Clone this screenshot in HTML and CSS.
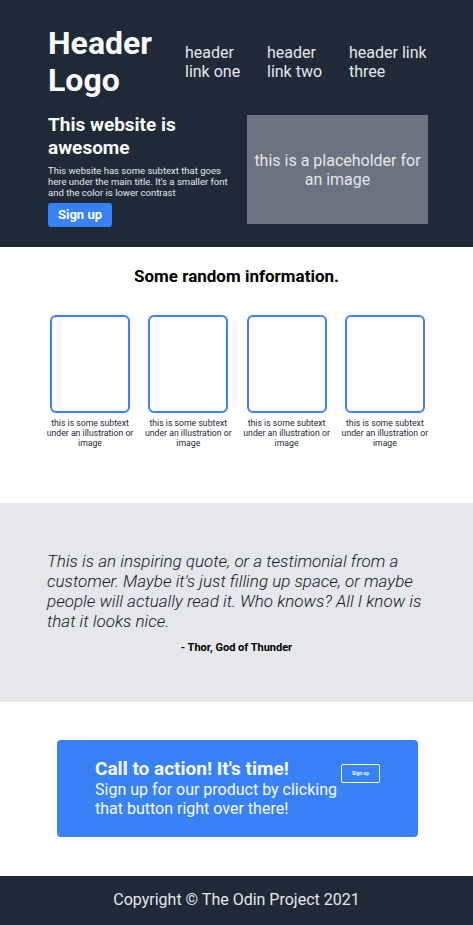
FILE: index.html
```html
<!DOCTYPE html>
<html lang="en">
<head>
<meta charset="UTF-8">
<title>Landing Page</title>
<link rel="stylesheet" href="styles.css">
</head>
<body>
<header class="hero">
  <div class="container">
    <div class="topbar">
      <div class="logo">Header Logo</div>
      <nav class="nav">
        <a href="#" class="nav-link">header link one</a>
        <a href="#" class="nav-link">header link two</a>
        <a href="#" class="nav-link">header link three</a>
      </nav>
    </div>
    <div class="hero-body">
      <div class="hero-text">
        <h1 class="hero-title">This website is awesome</h1>
        <p class="hero-sub">This website has some subtext that goes here under the main title. It's a smaller font and the color is lower contrast</p>
        <button class="btn-primary">Sign up</button>
      </div>
      <div class="hero-image">this is a placeholder for an image</div>
    </div>
  </div>
</header>

<section class="info">
  <h2 class="info-title">Some random information.</h2>
  <div class="cards">
    <div class="card"><div class="card-box"></div><p class="card-text">this is some subtext under an illustration or image</p></div>
    <div class="card"><div class="card-box"></div><p class="card-text">this is some subtext under an illustration or image</p></div>
    <div class="card"><div class="card-box"></div><p class="card-text">this is some subtext under an illustration or image</p></div>
    <div class="card"><div class="card-box"></div><p class="card-text">this is some subtext under an illustration or image</p></div>
  </div>
</section>

<section class="quote">
  <p class="quote-text">This is an inspiring quote, or a testimonial from a customer. Maybe it's just filling up space, or maybe people will actually read it. Who knows? All I know is that it looks nice.</p>
  <p class="quote-author">- Thor, God of Thunder</p>
</section>

<section class="cta-section">
  <div class="cta">
    <div class="cta-text">
      <h3 class="cta-title">Call to action! It's time!</h3>
      <p class="cta-sub">Sign up for our product by clicking that button right over there!</p>
    </div>
    <button class="btn-outline">Sign up</button>
  </div>
</section>

<footer class="footer">Copyright © The Odin Project 2021</footer>
</body>
</html>
```
FILE: styles.css
```css
* { box-sizing: border-box; }
body {
  margin: 0;
  font-family: Roboto, "Liberation Sans", sans-serif;
  color: #1f2937;
}
h1, h2, h3, p { margin: 0; }

.hero {
  background: #1f2937;
  padding: 25px 0 20px;
}
.container {
  width: 380px;
  margin-left: 48px;
}
.topbar {
  display: flex;
  justify-content: space-between;
  align-items: center;
}
.logo {
  font-size: 32px;
  font-weight: 700;
  line-height: 37px;
  color: #f9faf8;
  width: 110px;
}
.nav {
  display: grid;
  grid-template-columns: 70px 70px 79px;
  column-gap: 12px;
}
.nav-link {
  color: #e5e7eb;
  text-decoration: none;
  font-size: 16px;
  line-height: 19px;
}
.hero-body {
  display: flex;
  align-items: center;
  gap: 16px;
  margin-top: 14px;
}
.hero-text {
  flex: 1;
}
.hero-title {
  font-size: 19px;
  font-weight: 700;
  line-height: 23.3px;
  color: #f9faf8;
}
.hero-sub {
  font-size: 9.5px;
  line-height: 11px;
  color: #e5e7eb;
  margin-top: 5px;
}
.btn-primary {
  margin-top: 5px;
  background: #3882f6;
  color: #fff;
  border: none;
  border-radius: 3px;
  font-family: inherit;
  font-size: 13px;
  font-weight: 700;
  width: 64px;
  height: 24px;
  padding: 0;
}
.hero-image {
  width: 181px;
  height: 109px;
  background: #6b7280;
  color: #e5e7eb;
  font-size: 16px;
  line-height: 19px;
  display: flex;
  align-items: center;
  justify-content: center;
  text-align: center;
  padding: 0 4px;
}

.info {
  padding: 20px 0 55px;
}
.info-title {
  font-size: 17px;
  font-weight: 700;
  line-height: 19px;
  text-align: center;
  color: #000;
}
.cards {
  display: grid;
  grid-template-columns: repeat(4, 90px);
  column-gap: 8.3px;
  width: 385px;
  margin: 29px 0 0 45px;
}
.card {
  display: flex;
  flex-direction: column;
  align-items: center;
}
.card-box {
  width: 80px;
  height: 98px;
  border: 2px solid #3882f6;
  border-radius: 6px;
}
.card-text {
  margin-top: 5px;
  font-size: 8.7px;
  line-height: 10px;
  text-align: center;
  color: #1f2937;
}

.quote {
  background: #e5e7eb;
  padding: 48px 0 48px;
}
.quote-text {
  width: 382px;
  margin-left: 47px;
  font-size: 17px;
  font-weight: 300;
  font-style: italic;
  line-height: 20px;
  color: #111827;
}
.quote-author {
  margin-top: 10px;
  text-align: center;
  font-size: 11px;
  font-weight: 700;
  line-height: 13px;
  color: #000;
}

.cta-section {
  padding: 38px 0 39px;
}
.cta {
  width: 361px;
  margin-left: 57px;
  background: #3882f6;
  border-radius: 4px;
  padding: 18px 38px 19px 38px;
  display: flex;
  align-items: flex-start;
  gap: 3px;
  color: #f9faf8;
}
.cta-text {
  flex: 1;
}
.cta-title {
  font-size: 19px;
  font-weight: 700;
  line-height: 22px;
}
.cta-sub {
  font-size: 16px;
  line-height: 19px;
}
.btn-outline {
  margin-top: 6px;
  width: 39px;
  height: 19px;
  padding: 0;
  background: transparent;
  border: 1px solid #f9faf8;
  border-radius: 2px;
  color: #f9faf8;
  font-family: inherit;
  font-size: 5px;
  font-weight: 700;
}

.footer {
  background: #1f2937;
  color: #e5e7eb;
  text-align: center;
  font-size: 16px;
  line-height: 19px;
  padding: 14px 0 17px;
}
```
